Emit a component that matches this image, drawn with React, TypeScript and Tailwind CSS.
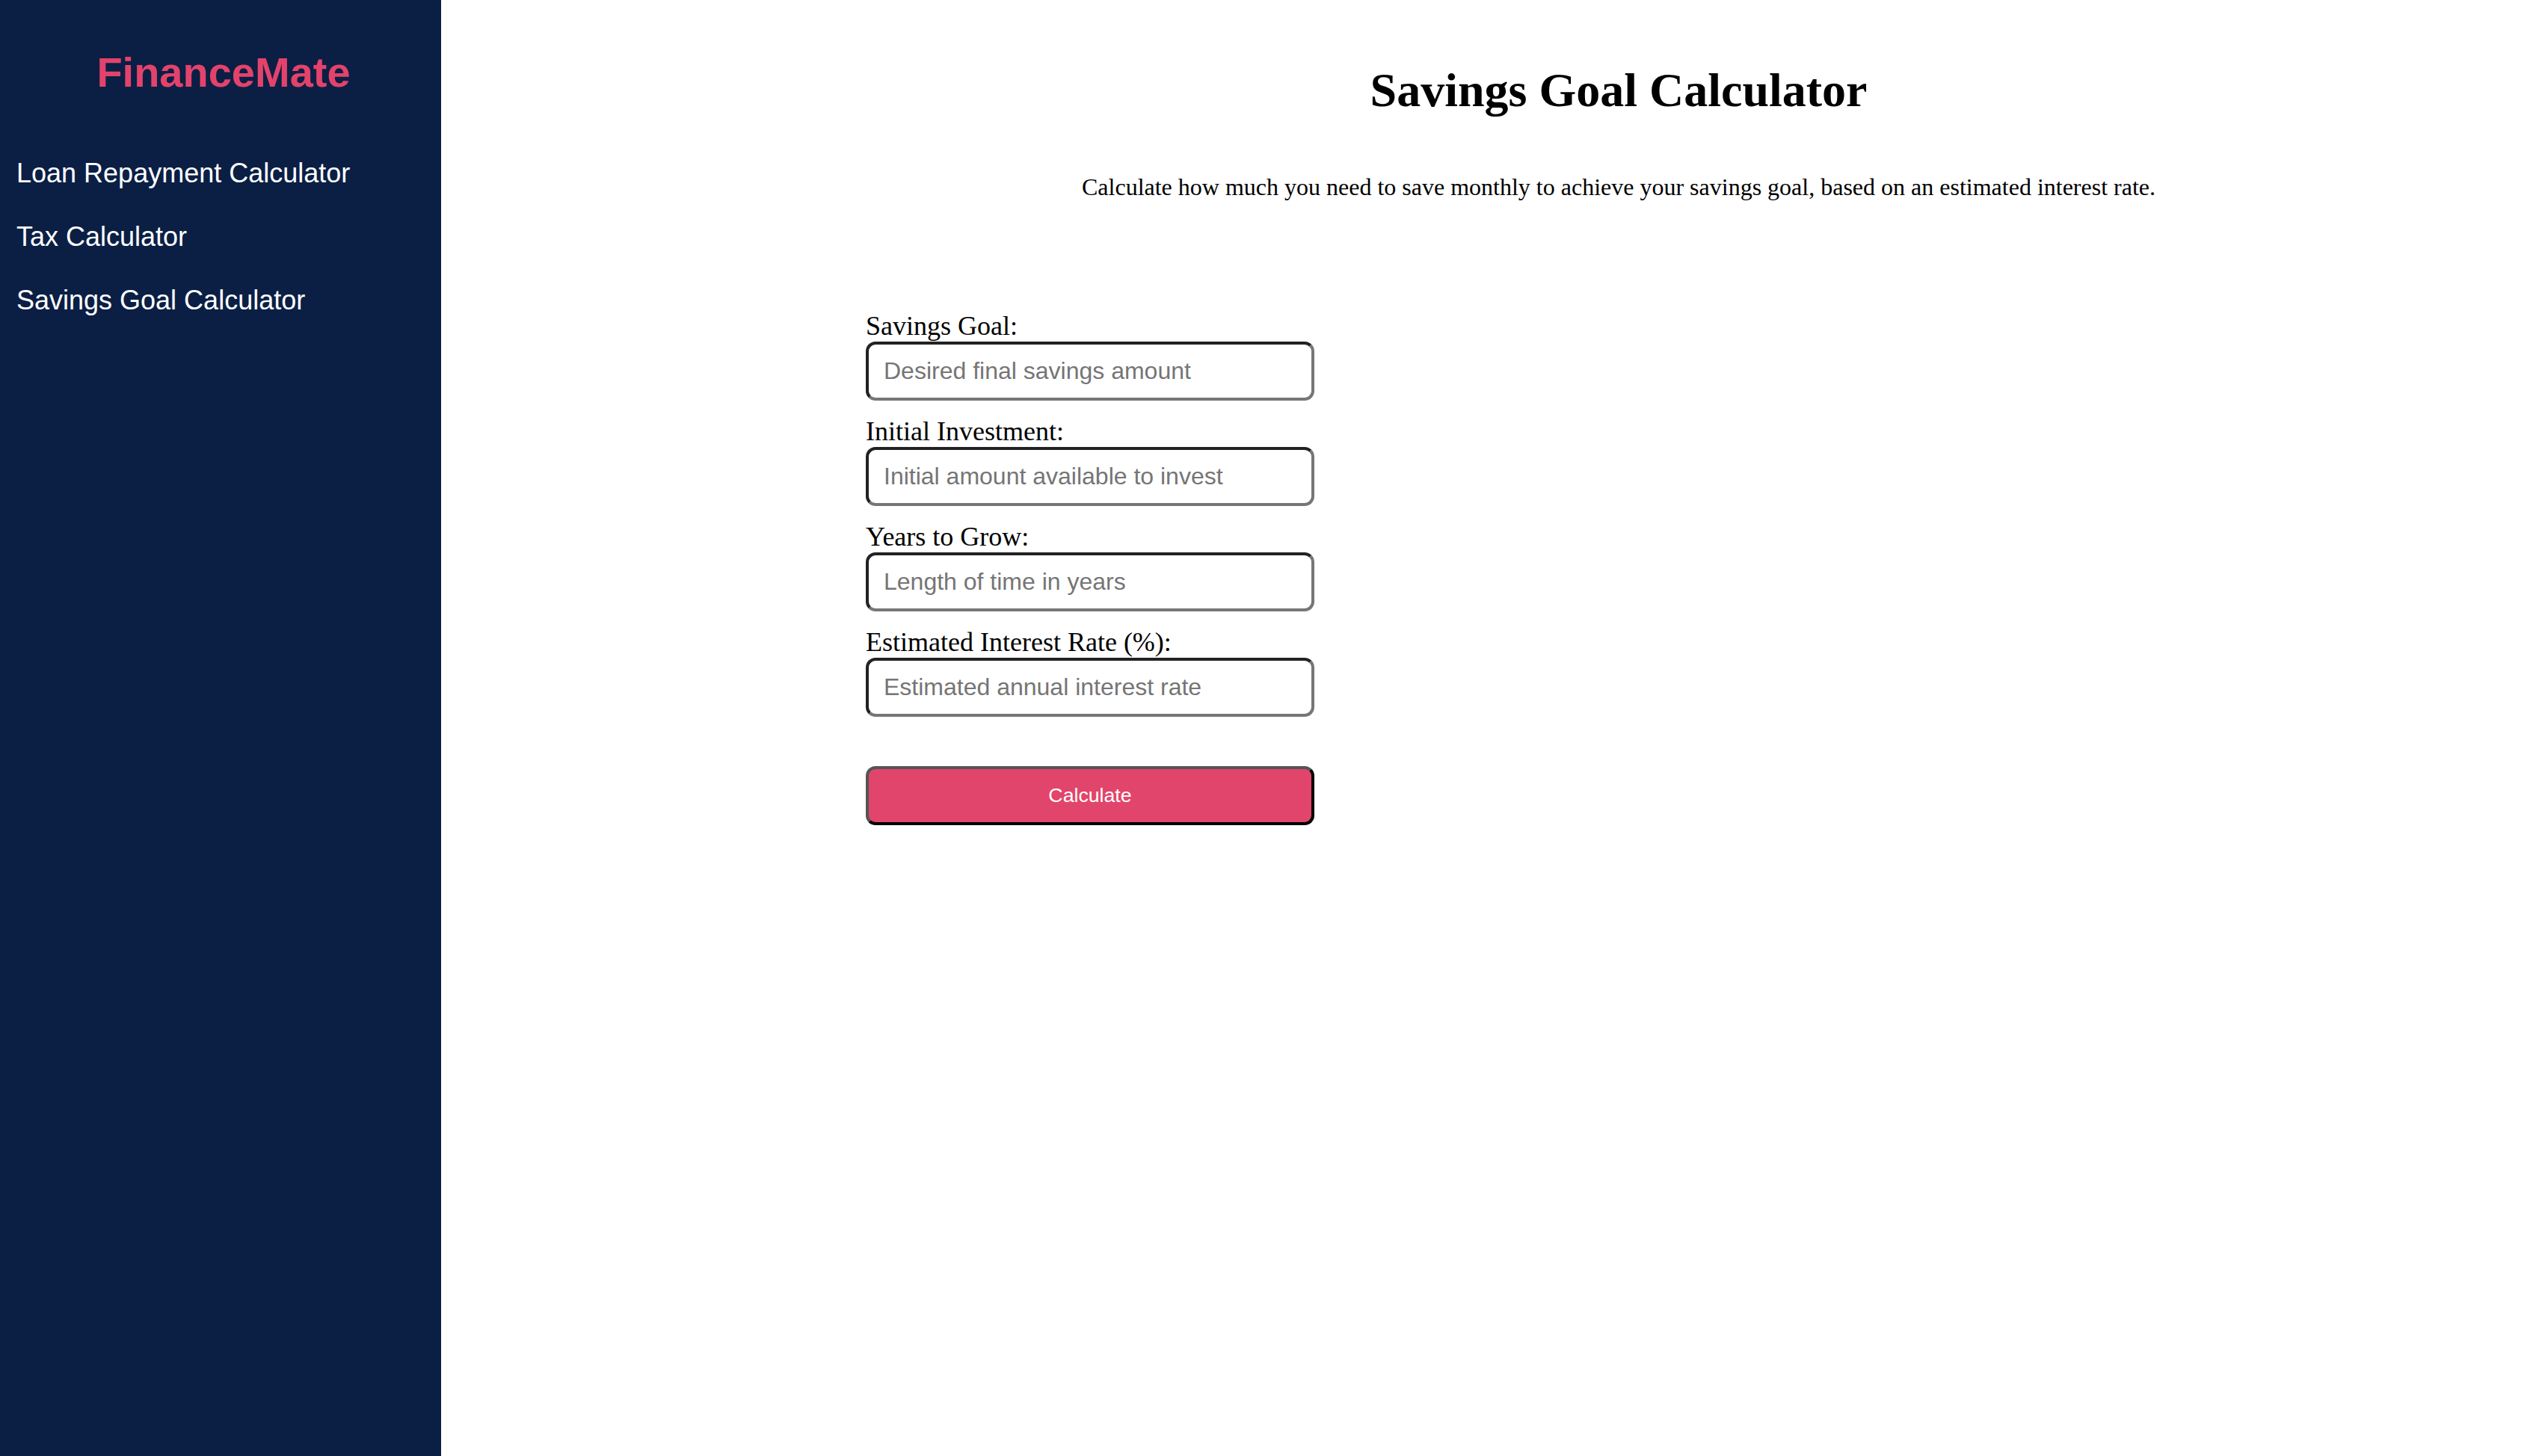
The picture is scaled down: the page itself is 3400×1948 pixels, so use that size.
import { useState } from 'react';

const fields = [
  { id: 'goal', label: 'Savings Goal:', placeholder: 'Desired final savings amount' },
  { id: 'initial', label: 'Initial Investment:', placeholder: 'Initial amount available to invest' },
  { id: 'years', label: 'Years to Grow:', placeholder: 'Length of time in years' },
  { id: 'rate', label: 'Estimated Interest Rate (%):', placeholder: 'Estimated annual interest rate' },
];

const links = ['Loan Repayment Calculator', 'Tax Calculator', 'Savings Goal Calculator'];

export default function App() {
  const [values, setValues] = useState<Record<string, string>>({});
  return (
    <div className="flex min-h-screen bg-white">
      <aside className="w-[590px] shrink-0 bg-[#0b1f45] font-['Liberation_Sans',Arial,sans-serif]">
        <h2 className="pt-[65px] pl-[8px] text-center text-[56px] leading-[64px] font-bold text-[#e3436b]">FinanceMate</h2>
        <ul className="mt-[82px] flex flex-col gap-[44px] pl-[22px]">
          {links.map(l => (
            <li key={l} className="text-[36px] leading-[41px] text-white">
              <a href="#">{l}</a>
            </li>
          ))}
        </ul>
      </aside>
      <main className="flex-1 pl-[568px] pr-[228px] pt-[84px] font-['Liberation_Serif','Times_New_Roman',serif] text-black">
        <h1 className="text-center text-[64px] leading-[74px] font-bold">Savings Goal Calculator</h1>
        <p className="mt-[74px] text-center text-[32px] leading-[37px]">
          Calculate how much you need to save monthly to achieve your savings goal, based on an estimated interest rate.
        </p>
        <form className="mt-[146px] w-[600px]" onSubmit={e => e.preventDefault()}>
          {fields.map(f => (
            <div key={f.id} className="pb-[20px]">
              <label htmlFor={f.id} className="block text-[36px] leading-[42px]">{f.label}</label>
              <input
                id={f.id}
                type="text"
                placeholder={f.placeholder}
                value={values[f.id] || ''}
                onChange={e => setValues({ ...values, [f.id]: e.target.value })}
                className="block h-[79px] w-[600px] rounded-[13px] border-[4px] border-t-[#222] border-l-[#222] border-r-[#767676] border-b-[#767676] bg-white px-[20px] font-['Liberation_Sans',Arial,sans-serif] text-[32px] text-black placeholder:text-[#757575] outline-none"
              />
            </div>
          ))}
          <button
            type="submit"
            className="mt-[46px] block h-[79px] w-[600px] rounded-[13px] border-[4px] border-t-[#555] border-l-[#555] border-r-black border-b-black bg-[#e2456b] font-['Liberation_Sans',Arial,sans-serif] text-[26.7px] text-white"
          >
            Calculate
          </button>
        </form>
      </main>
    </div>
  );
}
